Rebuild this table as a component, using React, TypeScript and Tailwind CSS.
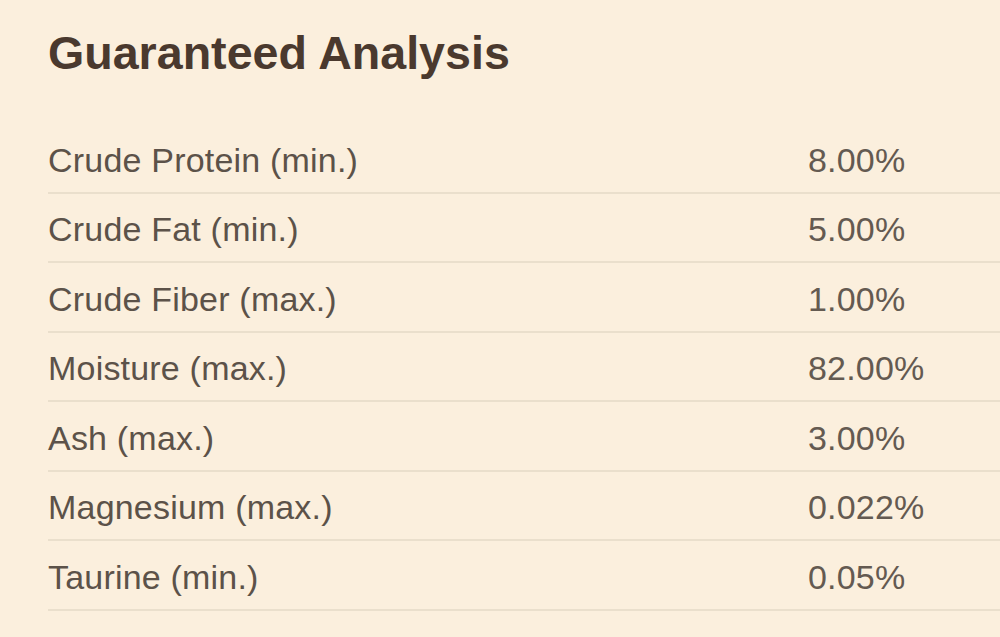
const rows = [
  { label: 'Crude Protein (min.)', value: '8.00%' },
  { label: 'Crude Fat (min.)', value: '5.00%' },
  { label: 'Crude Fiber (max.)', value: '1.00%' },
  { label: 'Moisture (max.)', value: '82.00%' },
  { label: 'Ash (max.)', value: '3.00%' },
  { label: 'Magnesium (max.)', value: '0.022%' },
  { label: 'Taurine (min.)', value: '0.05%' },
];

export default function App() {
  return (
    <div className="w-[1000px] h-[637px] overflow-hidden bg-[#fbefdd] pl-12 pt-[30px] font-['Liberation_Sans',Arial,sans-serif]">
      <h2 className="text-[46.6px] leading-[47px] font-bold text-[#4a392e]">Guaranteed Analysis</h2>
      <div className="mt-[47px]">
        {rows.map((row) => (
          <div
            key={row.label}
            className="flex items-center h-[69.5px] pt-[5px] border-b-2 border-[#eadfcc] text-[34px] tracking-[0.2px] text-[#5c5249]"
          >
            <span className="w-[760px] shrink-0">{row.label}</span>
            <span className="text-[#645a51]">{row.value}</span>
          </div>
        ))}
      </div>
    </div>
  );
}
